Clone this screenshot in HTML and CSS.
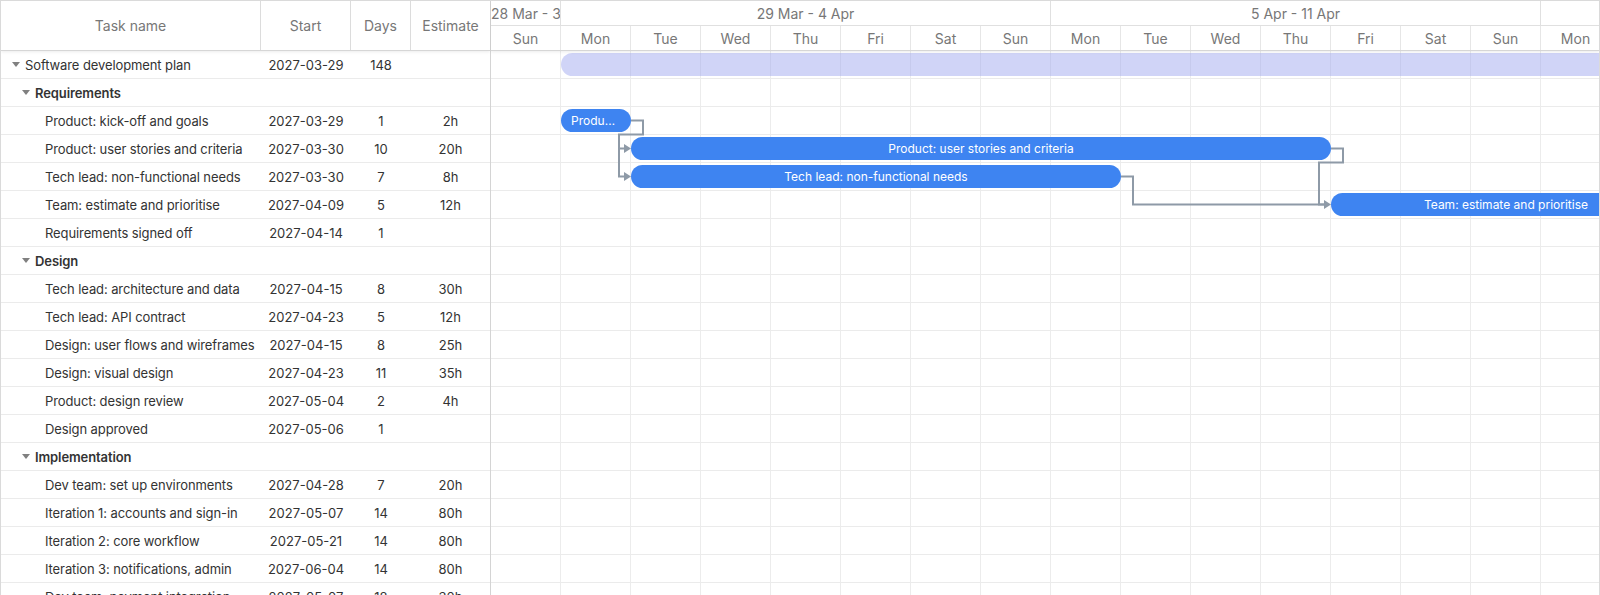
FILE: index.html
```html
<!DOCTYPE html>
<html>
<head>
<meta charset="utf-8">
<link rel="stylesheet" href="styles.css">
</head>
<body>
<div class="gantt">
  <div class="grid">
    <div class="grid-head">
      <div class="hc c-name">Task name</div>
      <div class="hc c-start">Start</div>
      <div class="hc c-days">Days</div>
      <div class="hc c-est">Estimate</div>
    </div>
    <div class="grid-body">
      <div class="row"><div class="c c-name lvl0"><span class="caret"></span>Software development plan</div><div class="c c-start">2027-03-29</div><div class="c c-days">148</div><div class="c c-est"></div></div>
      <div class="row group"><div class="c c-name lvl1"><span class="caret"></span>Requirements</div><div class="c c-start"></div><div class="c c-days"></div><div class="c c-est"></div></div>
      <div class="row"><div class="c c-name lvl2">Product: kick-off and goals</div><div class="c c-start">2027-03-29</div><div class="c c-days">1</div><div class="c c-est">2h</div></div>
      <div class="row"><div class="c c-name lvl2">Product: user stories and criteria</div><div class="c c-start">2027-03-30</div><div class="c c-days">10</div><div class="c c-est">20h</div></div>
      <div class="row"><div class="c c-name lvl2">Tech lead: non-functional needs</div><div class="c c-start">2027-03-30</div><div class="c c-days">7</div><div class="c c-est">8h</div></div>
      <div class="row"><div class="c c-name lvl2">Team: estimate and prioritise</div><div class="c c-start">2027-04-09</div><div class="c c-days">5</div><div class="c c-est">12h</div></div>
      <div class="row"><div class="c c-name lvl2">Requirements signed off</div><div class="c c-start">2027-04-14</div><div class="c c-days">1</div><div class="c c-est"></div></div>
      <div class="row group"><div class="c c-name lvl1"><span class="caret"></span>Design</div><div class="c c-start"></div><div class="c c-days"></div><div class="c c-est"></div></div>
      <div class="row"><div class="c c-name lvl2">Tech lead: architecture and data</div><div class="c c-start">2027-04-15</div><div class="c c-days">8</div><div class="c c-est">30h</div></div>
      <div class="row"><div class="c c-name lvl2">Tech lead: API contract</div><div class="c c-start">2027-04-23</div><div class="c c-days">5</div><div class="c c-est">12h</div></div>
      <div class="row"><div class="c c-name lvl2">Design: user flows and wireframes</div><div class="c c-start">2027-04-15</div><div class="c c-days">8</div><div class="c c-est">25h</div></div>
      <div class="row"><div class="c c-name lvl2">Design: visual design</div><div class="c c-start">2027-04-23</div><div class="c c-days">11</div><div class="c c-est">35h</div></div>
      <div class="row"><div class="c c-name lvl2">Product: design review</div><div class="c c-start">2027-05-04</div><div class="c c-days">2</div><div class="c c-est">4h</div></div>
      <div class="row"><div class="c c-name lvl2">Design approved</div><div class="c c-start">2027-05-06</div><div class="c c-days">1</div><div class="c c-est"></div></div>
      <div class="row group"><div class="c c-name lvl1"><span class="caret"></span>Implementation</div><div class="c c-start"></div><div class="c c-days"></div><div class="c c-est"></div></div>
      <div class="row"><div class="c c-name lvl2">Dev team: set up environments</div><div class="c c-start">2027-04-28</div><div class="c c-days">7</div><div class="c c-est">20h</div></div>
      <div class="row"><div class="c c-name lvl2">Iteration 1: accounts and sign-in</div><div class="c c-start">2027-05-07</div><div class="c c-days">14</div><div class="c c-est">80h</div></div>
      <div class="row"><div class="c c-name lvl2">Iteration 2: core workflow</div><div class="c c-start">2027-05-21</div><div class="c c-days">14</div><div class="c c-est">80h</div></div>
      <div class="row"><div class="c c-name lvl2">Iteration 3: notifications, admin</div><div class="c c-start">2027-06-04</div><div class="c c-days">14</div><div class="c c-est">80h</div></div>
      <div class="row"><div class="c c-name lvl2">Dev team: payment integration</div><div class="c c-start">2027-05-07</div><div class="c c-days">18</div><div class="c c-est">30h</div></div>
    </div>
  </div>
  <div class="chart">
    <div class="scale">
      <div class="scale-row weeks">
        <div class="wk wk-first">28 Mar - 3 Apr</div>
        <div class="wk wk-full">29 Mar - 4 Apr</div>
        <div class="wk wk-full">5 Apr - 11 Apr</div>
        <div class="wk wk-full">12 Apr - 18 Apr</div>
      </div>
      <div class="scale-row days">
        <div class="day">Sun</div><div class="day">Mon</div><div class="day">Tue</div><div class="day">Wed</div><div class="day">Thu</div><div class="day">Fri</div><div class="day">Sat</div><div class="day">Sun</div>
        <div class="day">Mon</div><div class="day">Tue</div><div class="day">Wed</div><div class="day">Thu</div><div class="day">Fri</div><div class="day">Sat</div><div class="day">Sun</div><div class="day">Mon</div>
      </div>
    </div>
    <div class="chart-body">
      <div class="trow"><div class="bar summary" style="left:70px;width:10360px"></div></div>
      <div class="trow"></div>
      <div class="trow"><div class="bar task" style="left:70px;width:70px">Product: kick-off and goals</div></div>
      <div class="trow"><div class="bar task" style="left:140px;width:700px">Product: user stories and criteria</div></div>
      <div class="trow"><div class="bar task" style="left:140px;width:490px">Tech lead: non-functional needs</div></div>
      <div class="trow"><div class="bar task" style="left:840px;width:350px">Team: estimate and prioritise</div></div>
      <div class="trow"></div>
      <div class="trow"></div>
      <div class="trow"></div>
      <div class="trow"></div>
      <div class="trow"></div>
      <div class="trow"></div>
      <div class="trow"></div>
      <div class="trow"></div>
      <div class="trow"></div>
      <div class="trow"></div>
      <div class="trow"></div>
      <div class="trow"></div>
      <div class="trow"></div>
      <div class="trow"></div>
      <svg class="links" width="1108" height="560" viewBox="0 0 1108 560">
        <g fill="none" stroke="#8e9aa7" stroke-width="2">
          <path d="M140 69.5 H152 V83.5 H128 V97.5 H134"/>
          <path d="M128 83.5 V125.5 H134"/>
          <path d="M840 97.5 H852 V111.5 H828 V153.5 H834"/>
          <path d="M630 125.5 H642 V153.5 H834"/>
        </g>
        <g fill="#8e9aa7">
          <polygon points="133,93 140,97.5 133,102"/>
          <polygon points="133,121 140,125.5 133,130"/>
          <polygon points="833,149 840,153.5 833,158"/>
        </g>
      </svg>
    </div>
  </div>
</div>
</body>
</html>
```

FILE: styles.css
```css
* { box-sizing: border-box; }
html, body { margin: 0; padding: 0; background: #fff; }
body {
  font-family: Inter, "Noto Sans", "Liberation Sans", sans-serif;
  color: #333;
  overflow: hidden;
  height: 595px;
}
.gantt {
  display: flex;
  width: 1600px;
  height: 620px;
  border: 1px solid #dadada;
  overflow: hidden;
}
.grid {
  width: 490px;
  flex: none;
  border-right: 1px solid #d4d4d4;
  display: flex;
  flex-direction: column;
}
.grid-head {
  display: flex;
  height: 50px;
  border-bottom: 1px solid #d6d6d6;
  box-shadow: 0 1px 3px rgba(0,0,0,0.08);
  position: relative;
  z-index: 2;
  background: #fff;
}
.hc {
  display: flex;
  align-items: center;
  justify-content: center;
  font-size: 14px;
  color: #777;
  border-right: 1px solid #dcdcdc;
}
.hc.c-est { border-right: none; }
.c-name { width: 260px; flex: none; }
.c-start { width: 90px; flex: none; }
.c-days { width: 60px; flex: none; }
.c-est { width: 79px; flex: none; }
.row {
  display: flex;
  height: 28px;
  border-bottom: 1px solid #ebebeb;
  font-size: 13px;
}
.c {
  display: flex;
  align-items: center;
  white-space: nowrap;
  overflow: hidden;
}
.c.c-name { letter-spacing: -0.1px; }
.c.c-start, .c.c-days, .c.c-est { justify-content: center; }
.c-name.lvl0 { padding-left: 11px; }
.c-name.lvl1 { padding-left: 21px; }
.c-name.lvl2 { padding-left: 44px; }
.group .c-name { font-weight: 600; }
.caret {
  width: 0;
  height: 0;
  border-left: 4.5px solid transparent;
  border-right: 4.5px solid transparent;
  border-top: 5px solid #808080;
  margin-right: 5px;
  flex: none;
}
.chart {
  flex: 1;
  min-width: 0;
  overflow: hidden;
  display: flex;
  flex-direction: column;
}
.scale {
  height: 50px;
  border-bottom: 1px solid #d6d6d6;
  box-shadow: 0 1px 3px rgba(0,0,0,0.08);
  position: relative;
  z-index: 2;
  background: #fff;
  font-size: 14px;
  color: #777;
}
.scale-row {
  display: flex;
  height: 25px;
}
.weeks { border-bottom: 1px solid #e0e0e0; height: 25px; }
.days { height: 24px; }
.wk {
  flex: none;
  display: flex;
  align-items: center;
  justify-content: center;
  white-space: nowrap;
  overflow: hidden;
  border-right: 1px solid #e0e0e0;
}
.wk-first { width: 70px; justify-content: flex-start; }
.wk-full { width: 490px; }
.day {
  flex: none;
  width: 70px;
  display: flex;
  align-items: center;
  justify-content: center;
  border-right: 1px solid #e6e6e6;
}
.chart-body {
  position: relative;
  flex: 1;
  background-image: repeating-linear-gradient(to right, transparent 0 69px, #ececec 69px 70px);
}
.trow {
  position: relative;
  height: 28px;
  border-bottom: 1px solid #ebebeb;
}
.bar {
  position: absolute;
  top: 2px;
  height: 23px;
  border-radius: 12px;
  white-space: nowrap;
  overflow: hidden;
  text-overflow: ellipsis;
  font-size: 12px;
  line-height: 23px;
  text-align: center;
  color: #fff;
  padding: 0 10px;
}
.summary { background: rgba(156, 166, 238, 0.48); }
.task { background: #3e84f1; }
.links {
  position: absolute;
  left: 0;
  top: 0;
  pointer-events: none;
}
```
